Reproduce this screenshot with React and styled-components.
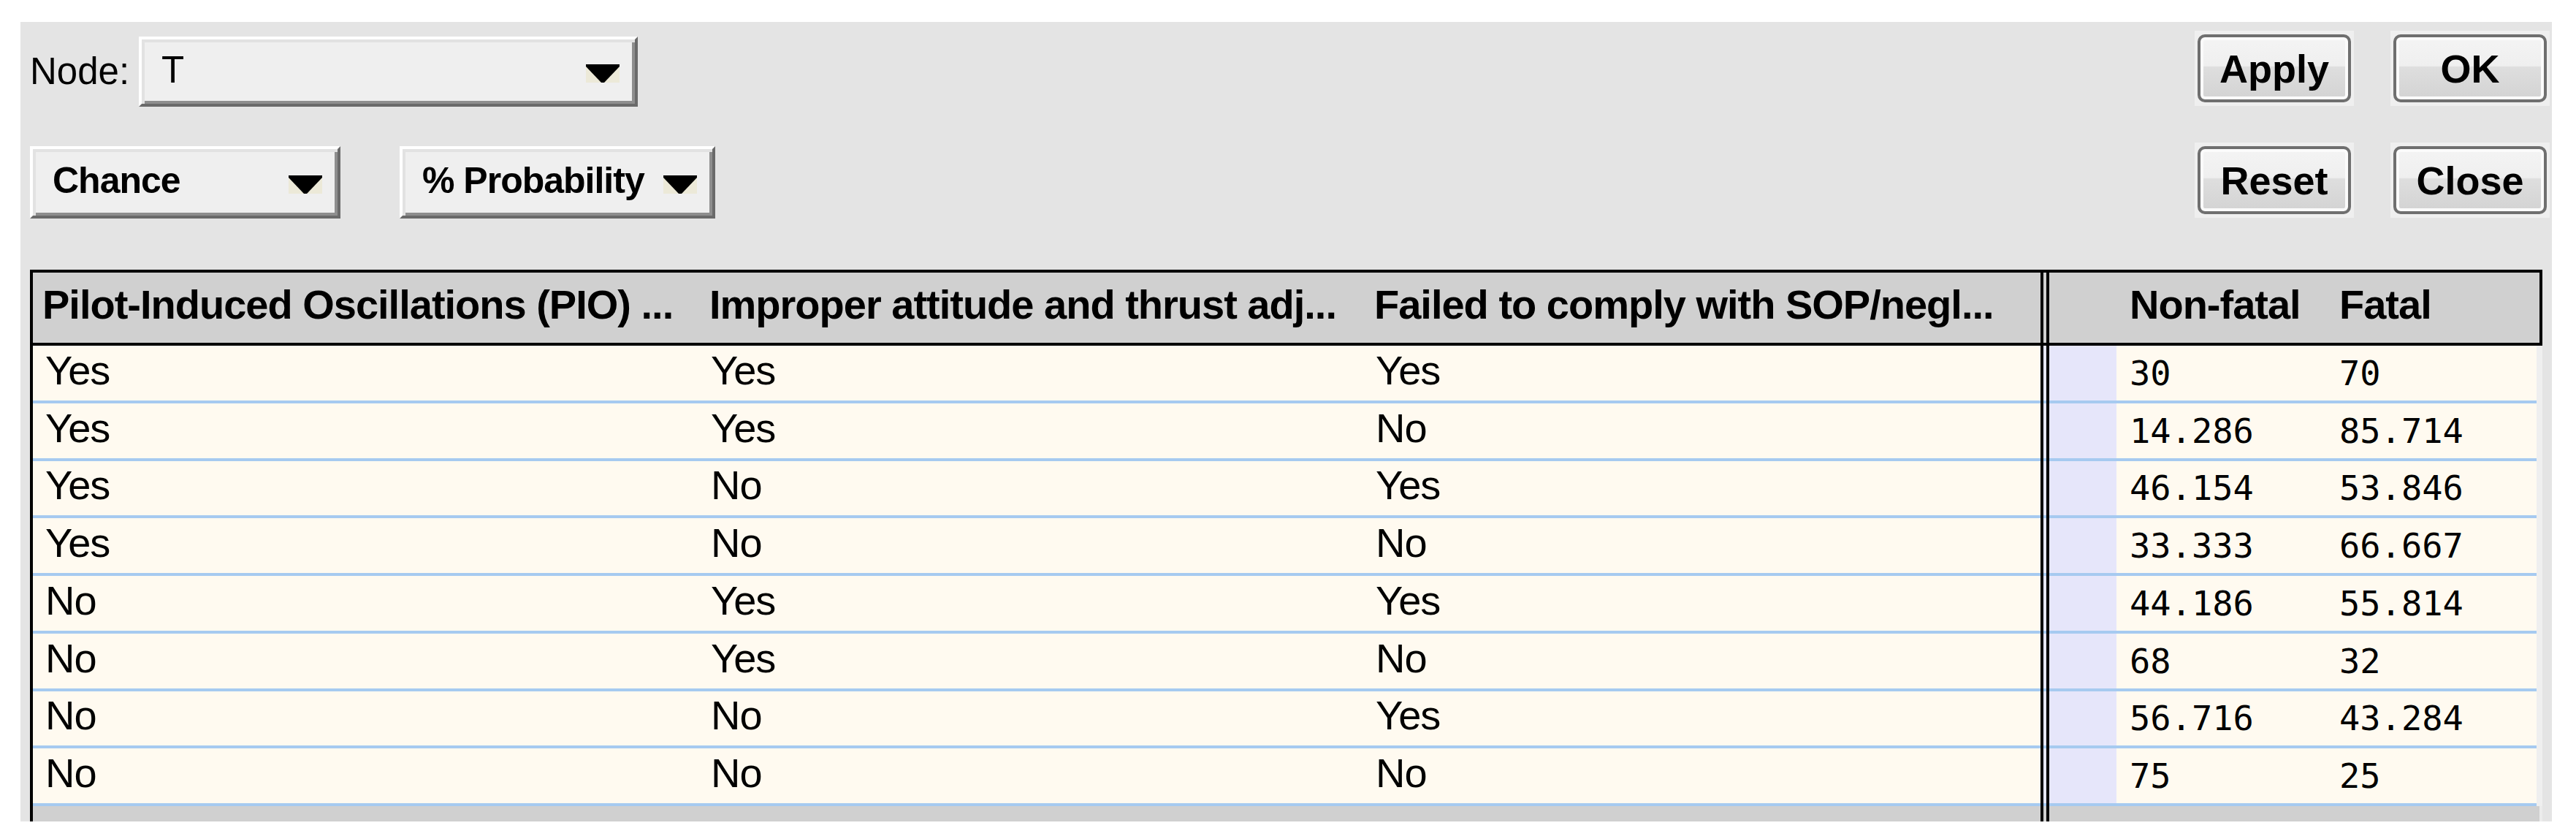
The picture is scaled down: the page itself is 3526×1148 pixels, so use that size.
import React from 'react'
import styled, { createGlobalStyle } from 'styled-components'

const GlobalStyle = createGlobalStyle`
  html, body {
    margin: 0;
    padding: 0;
    background: #ffffff;
  }
  body {
    font-family: "Liberation Sans", Arial, sans-serif;
    color: #000;
    overflow: hidden;
  }
`

const rows = [
  ['Yes', 'Yes', 'Yes', '30', '70'],
  ['Yes', 'Yes', 'No', '14.286', '85.714'],
  ['Yes', 'No', 'Yes', '46.154', '53.846'],
  ['Yes', 'No', 'No', '33.333', '66.667'],
  ['No', 'Yes', 'Yes', '44.186', '55.814'],
  ['No', 'Yes', 'No', '68', '32'],
  ['No', 'No', 'Yes', '56.716', '43.284'],
  ['No', 'No', 'No', '75', '25'],
]

const columns = '913px 910px 925px 12px 92px 287px 1fr'

const Page = styled.div`
  padding: 30px 33px 24px 28px;
`

const Panel = styled.div`
  background: #e4e4e4;
  height: 1094px;
  display: flex;
  flex-direction: column;
`

const Controls = styled.div`
  height: 339px;
  flex-shrink: 0;
  display: flex;
  justify-content: space-between;
`

const LeftControls = styled.div`
  padding: 20px 0 0 13px;
  display: flex;
  flex-direction: column;
`

const NodeRow = styled.div`
  display: flex;
  align-items: center;
`

const ModeRow = styled.div`
  display: flex;
  gap: 81px;
  margin-top: 54px;
`

const NodeLabel = styled.span`
  width: 149px;
  font-size: 51px;
  padding-bottom: 2px;
`

const Combo = styled.div`
  box-sizing: border-box;
  width: ${p => p.$w}px;
  height: ${p => p.$h}px;
  display: flex;
  align-items: center;
  justify-content: space-between;
  padding: 0 21px 0 27px;
  background: #efefef;
  border: 4px solid;
  border-color: #ffffff #6a6a6a #6a6a6a #ffffff;
  box-shadow: inset 4px 4px 0 0 #e2e2e2, inset -4px -4px 0 0 #8e8e8e;
  font-size: ${p => (p.$bold ? 50 : 51)}px;
  font-weight: ${p => (p.$bold ? 700 : 400)};
  letter-spacing: ${p => (p.$bold ? '-1px' : '0')};
`

const ComboText = styled.span`
  white-space: nowrap;
  padding-bottom: 6px;
`

const ArrowIcon = styled.svg`
  flex-shrink: 0;
  margin-top: 5px;
`

const ButtonGrid = styled.div`
  display: grid;
  grid-template-columns: 218px 218px;
  grid-auto-rows: 103px;
  gap: 50px;
  padding: 12px 3px 0 0;
`

const ButtonCell = styled.div`
  background: #efefef;
  padding: 5px 4px;
`

const Button = styled.button`
  box-sizing: border-box;
  width: 210px;
  height: 93px;
  padding: 0;
  border: 4px solid #6f6f6f;
  border-radius: 10px;
  box-shadow: inset 0 0 0 4px #fbfbfb;
  background: linear-gradient(to bottom, #f4f4f4 0%, #efefef 46%, #dedede 48%, #d3d3d3 100%);
  font-family: "Liberation Sans", Arial, sans-serif;
  font-size: 54px;
  font-weight: 700;
  color: #000;
`

const Table = styled.div`
  flex: 1;
  margin: 0 13px;
  display: flex;
  flex-direction: column;
  border-left: 4px solid #000;
  background: #d0d0d0;
`

const HeaderRow = styled.div`
  display: grid;
  grid-template-columns: ${columns};
  height: 104px;
  box-sizing: border-box;
  border-top: 4px solid #000;
  border-bottom: 4px solid #000;
  border-right: 4px solid #000;
  background: #d0d0d0;
`

const HeaderCell = styled.div`
  display: flex;
  align-items: center;
  padding: 0 0 10px ${p => p.$pad}px;
  font-size: 56px;
  font-weight: 700;
  letter-spacing: -1px;
  white-space: nowrap;
  overflow: hidden;
`

const BodyRow = styled.div`
  display: grid;
  grid-template-columns: ${columns};
  height: 78.75px;
  border-right: 8px solid #efefef;
`

const Cell = styled.div`
  box-sizing: border-box;
  display: flex;
  align-items: center;
  padding: 0 0 ${p => (p.$mono ? 0 : 8)}px ${p => p.$pad}px;
  background: ${p => (p.$lavender ? '#e6e6fa' : '#fffaf0')};
  border-bottom: 4px solid #a6caf0;
  font-family: ${p => (p.$mono ? '"DejaVu Sans Mono", "Liberation Mono", monospace' : '"Liberation Sans", Arial, sans-serif')};
  font-size: ${p => (p.$mono ? 47 : 56)}px;
  letter-spacing: ${p => (p.$mono ? '0' : '-1px')};
  white-space: nowrap;
`

const Divider = styled.div`
  grid-column: 4;
  background:
    linear-gradient(to right, #000 0 4px, transparent 4px 8px, #000 8px 12px),
    ${p => p.$gap};
`

const Filler = styled.div`
  flex: 1;
  display: grid;
  grid-template-columns: ${columns};
  border-right: 4px solid #ececec;
`

function Arrow() {
  return (
    <ArrowIcon width="46" height="25" viewBox="0 0 46 25">
      <rect width="46" height="25" fill="#ece9d8" />
      <polygon points="0,0 46,0 46,3 25,25 21,25 0,3" fill="#000" />
    </ArrowIcon>
  )
}

const bodyGap = 'linear-gradient(to top, #a6caf0 0 4px, #e6e6fa 4px)'

export default function App() {
  return (
    <Page>
      <GlobalStyle />
      <Panel>
        <Controls>
          <LeftControls>
            <NodeRow>
              <NodeLabel>Node:</NodeLabel>
              <Combo $w={683} $h={96}>
                <ComboText>T</ComboText>
                <Arrow />
              </Combo>
            </NodeRow>
            <ModeRow>
              <Combo $w={425} $h={99} $bold>
                <ComboText>Chance</ComboText>
                <Arrow />
              </Combo>
              <Combo $w={432} $h={99} $bold>
                <ComboText>% Probability</ComboText>
                <Arrow />
              </Combo>
            </ModeRow>
          </LeftControls>
          <ButtonGrid>
            <ButtonCell><Button>Apply</Button></ButtonCell>
            <ButtonCell><Button>OK</Button></ButtonCell>
            <ButtonCell><Button>Reset</Button></ButtonCell>
            <ButtonCell><Button>Close</Button></ButtonCell>
          </ButtonGrid>
        </Controls>

        <Table>
          <HeaderRow>
            <HeaderCell $pad={13}>Pilot-Induced Oscillations (PIO) ...</HeaderCell>
            <HeaderCell $pad={13}>Improper attitude and thrust adj...</HeaderCell>
            <HeaderCell $pad={13}>Failed to comply with SOP/negl...</HeaderCell>
            <Divider $gap="#d0d0d0" />
            <HeaderCell $pad={0} />
            <HeaderCell $pad={18}>Non-fatal</HeaderCell>
            <HeaderCell $pad={18}>Fatal</HeaderCell>
          </HeaderRow>
          {rows.map((r, i) => (
            <BodyRow key={i}>
              <Cell $pad={17}>{r[0]}</Cell>
              <Cell $pad={15}>{r[1]}</Cell>
              <Cell $pad={15}>{r[2]}</Cell>
              <Divider $gap={bodyGap} />
              <Cell $pad={0} $lavender />
              <Cell $pad={18} $mono>{r[3]}</Cell>
              <Cell $pad={18} $mono>{r[4]}</Cell>
            </BodyRow>
          ))}
          <Filler>
            <Divider $gap="#d0d0d0" />
          </Filler>
        </Table>
      </Panel>
    </Page>
  )
}
